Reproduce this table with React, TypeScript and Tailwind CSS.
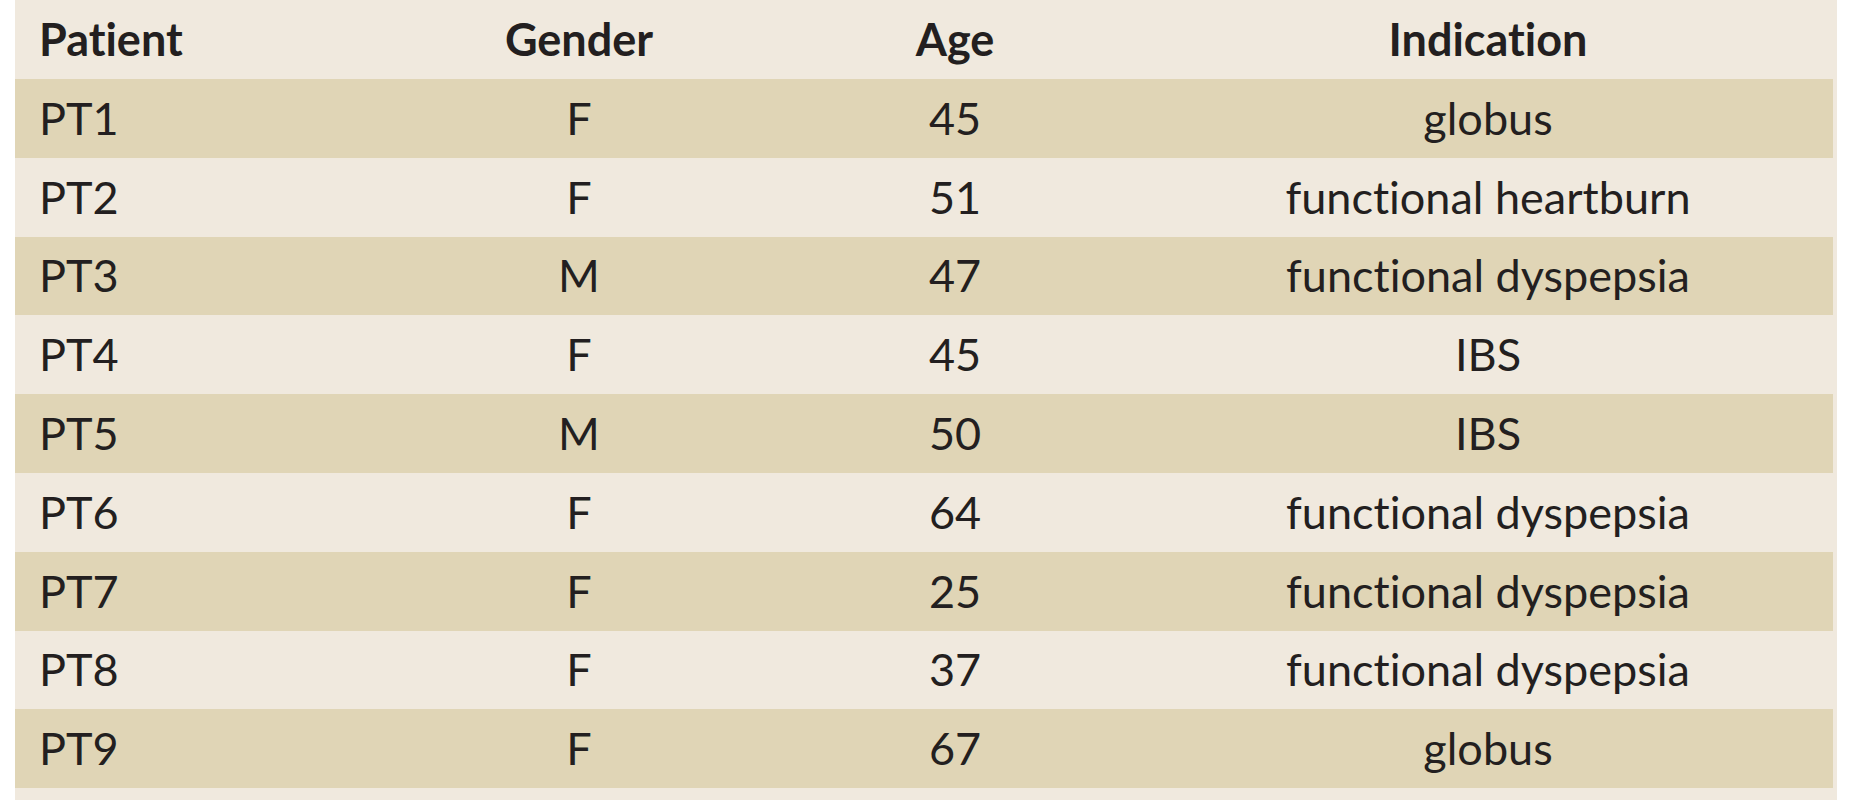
const rows = [
  { id: 'PT1', gender: 'F', age: 45, indication: 'globus' },
  { id: 'PT2', gender: 'F', age: 51, indication: 'functional heartburn' },
  { id: 'PT3', gender: 'M', age: 47, indication: 'functional dyspepsia' },
  { id: 'PT4', gender: 'F', age: 45, indication: 'IBS' },
  { id: 'PT5', gender: 'M', age: 50, indication: 'IBS' },
  { id: 'PT6', gender: 'F', age: 64, indication: 'functional dyspepsia' },
  { id: 'PT7', gender: 'F', age: 25, indication: 'functional dyspepsia' },
  { id: 'PT8', gender: 'F', age: 37, indication: 'functional dyspepsia' },
  { id: 'PT9', gender: 'F', age: 67, indication: 'globus' },
]

const cols = 'grid grid-cols-[389px_350px_402px_1fr] items-center'

export default function App() {
  return (
    <div className="h-[800px] w-full bg-white font-['Lato','Liberation_Sans',sans-serif] text-[45px] leading-none text-[#231f20] [font-variant-ligatures:none]">
      <div className="ml-[15px] h-full w-[1822px] bg-[#f0e9de] pr-[4px]">
        <div className={`${cols} h-[79px] font-bold`}>
          <div className="pl-[24px]">Patient</div>
          <div className="text-center">Gender</div>
          <div className="text-center">Age</div>
          <div className="pr-[13px] text-center">Indication</div>
        </div>
        {rows.map((r, i) => (
          <div
            key={r.id}
            className={`${cols} h-[78.8px] ${i % 2 === 0 ? 'bg-[#e0d5b6]' : ''}`}
          >
            <div className="pl-[24px]">{r.id}</div>
            <div className="text-center">{r.gender}</div>
            <div className="text-center">{r.age}</div>
            <div className="pr-[13px] text-center">{r.indication}</div>
          </div>
        ))}
      </div>
    </div>
  )
}
